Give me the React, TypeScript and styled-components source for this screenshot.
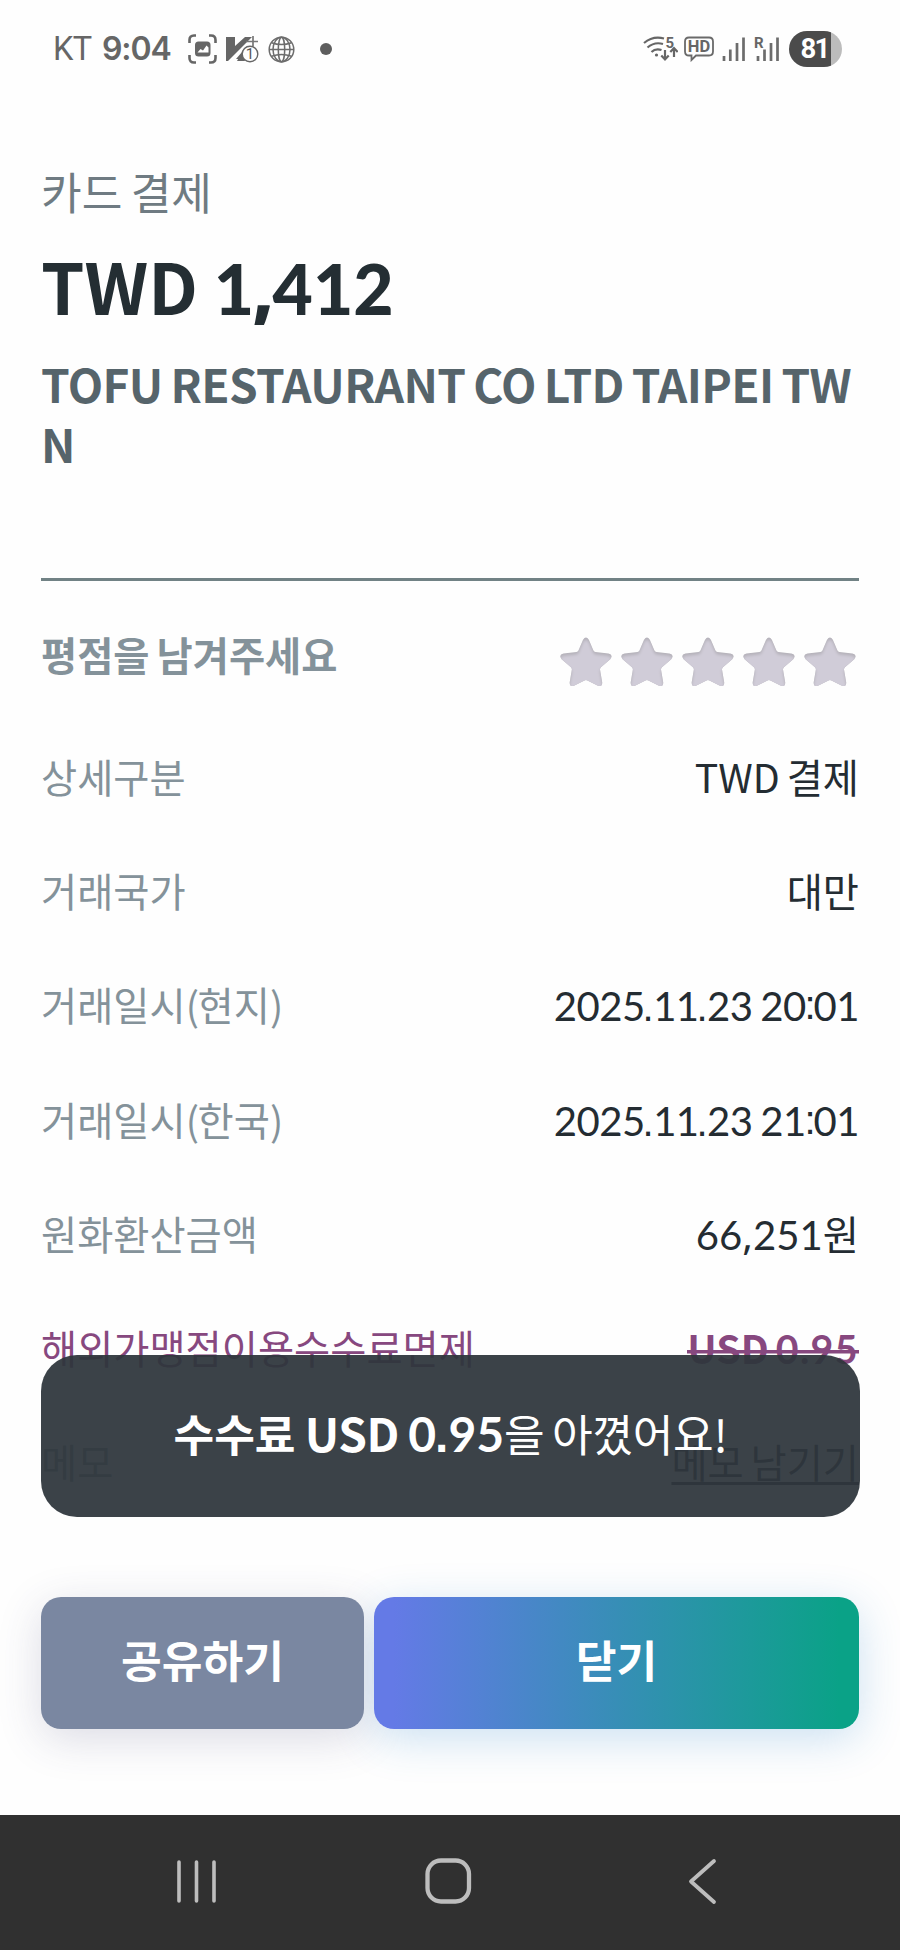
import React from "react";
import styled, { createGlobalStyle, css } from "styled-components";

const GlobalStyle = createGlobalStyle`
  * { box-sizing: border-box; }
  body {
    margin: 0;
    background: #fefefe;
    font-family: "Noto Sans CJK KR", sans-serif;
  }
`;

const Screen = styled.div`
  position: relative;
  display: flex;
  flex-direction: column;
  width: 900px;
  height: 1950px;
  background: #fefefe;
  overflow: hidden;
`;

/* ---------- status bar ---------- */

const StatusBar = styled.header`
  display: flex;
  align-items: center;
  height: 98px;
  padding: 0 58px 0 53px;
  color: #666;
`;

const Carrier = styled.span`
  width: 49px;
  font: 400 32.5px/40px Roboto, sans-serif;
  letter-spacing: -0.6px;
`;

const Clock = styled.span`
  width: 86px;
  font: 600 32px/40px Inter, sans-serif;
  letter-spacing: -1.1px;
`;

const NoticeIcons = styled.div`
  display: flex;
  align-items: center;
  gap: 9px;
`;

const MoreDot = styled.i`
  width: 12px;
  height: 12px;
  margin-left: 16px;
  border-radius: 50%;
  background: #5e5e5e;
`;

const SystemIcons = styled.div`
  display: flex;
  align-items: center;
  gap: 8px;
  margin-left: auto;
`;

const Battery = styled.div`
  display: flex;
  align-items: center;
  justify-content: center;
  width: 53px;
  height: 36px;
  margin-left: 1px;
  border-radius: 18px;
  background: linear-gradient(to right, #4b4b4b 42px, #bcbcbc 42px);
  color: #fff;
  font: 700 27.5px/36px Roboto, sans-serif;
  letter-spacing: -1.8px;
  padding-right: 2px;
`;

/* ---------- content ---------- */

const Content = styled.main`
  padding: 65px 41px 0;
  height: 1499px;
`;

const Kind = styled.p`
  margin: 0;
  font-size: 44.2px;
  line-height: 56px;
  word-spacing: -1.5px;
  color: #6f7b82;
`;

const Amount = styled.h1`
  margin: 21px 0 0;
  font-size: 69.6px;
  font-weight: 700;
  line-height: 90px;
  color: #242e33;
`;

const Merchant = styled.h2`
  margin: 23px 0 0;
  font-size: 46px;
  font-weight: 700;
  line-height: 60px;
  letter-spacing: -0.6px;
  word-spacing: -2px;
  word-break: break-all;
  color: #56646b;
`;

const Divider = styled.hr`
  height: 3px;
  margin: 105px 0 0;
  border: 0;
  background: #718285;
`;

const RatingRow = styled.section`
  display: flex;
  align-items: center;
  justify-content: space-between;
  height: 146px;
`;

const RatingLabel = styled.strong`
  font-size: 39.3px;
  font-weight: 700;
  line-height: 50px;
  word-spacing: -1.8px;
  color: #84929a;
`;

const Stars = styled.div`
  display: flex;
  gap: 8.9px;
  padding: 16px 3.5px 0 0;
`;

const Details = styled.dl`
  margin: -8px 0 0;
`;

const Row = styled.div<{ $accent?: boolean }>`
  display: flex;
  justify-content: space-between;
  height: 114.2px;
  font-size: 39.3px;
  line-height: 114px;
  word-spacing: -2px;
  white-space: pre;
  --label: ${(p) => (p.$accent ? "#87487f" : "#84929a")};
  --value: ${(p) => (p.$accent ? "#87487f" : "#242c32")};
`;

const Label = styled.dt`
  color: var(--label);
`;

const Paren = styled.span`
  letter-spacing: -1.3px;
`;

const Value = styled.dd<{ $struck?: boolean; $link?: boolean }>`
  margin: 0;
  color: var(--value);
  ${(p) =>
    p.$struck &&
    css`
      font-weight: 700;
      background: linear-gradient(var(--value), var(--value)) 0 60px / 100% 3.5px no-repeat;
    `}
  ${(p) =>
    p.$link &&
    css`
      text-decoration: underline 3px;
      text-underline-offset: 4px;
      text-decoration-skip-ink: none;
    `}
`;

/* Numerals are set in Lato beside the Korean face. */
const Digits = styled.span<{ $track?: number; $size?: string; $weight?: number }>`
  font-family: Lato, sans-serif;
  font-size: ${(p) => p.$size ?? "1em"};
  ${(p) => p.$weight && `font-weight: ${p.$weight};`}
  line-height: 0;
  letter-spacing: ${(p) => p.$track ?? 0}px;
`;

const Dot = styled.span`
  display: inline-block;
  margin: 0 -0.6px 0 -2.2px;
  font-family: "Liberation Sans", sans-serif;
  line-height: 0;
  letter-spacing: 0;
`;

const BoldDot = styled(Dot)`
  margin: 0 0 0 -1px;
`;

const Colon = styled(Dot)`
  margin: 0 -2.1px 0 -1.3px;
  transform: translateY(-2px);
`;

const Comma = styled.span<{ $pull?: number }>`
  display: inline-block;
  margin: 0 ${(p) => -(p.$pull ?? 0)}px;
  font-family: "Noto Sans", sans-serif;
  font-weight: inherit;
  line-height: 0;
  letter-spacing: 0;
`;

/* ---------- toast ---------- */

const Toast = styled.div`
  position: absolute;
  left: 41px;
  top: 1355px;
  display: flex;
  align-items: center;
  justify-content: center;
  width: 819px;
  height: 162px;
  padding-bottom: 6px;
  border-radius: 36px;
  background: rgba(47, 54, 61, 0.94);
  color: #fff;
  font-size: 44.2px;
  line-height: 60px;
  white-space: pre;
`;

const ToastText = styled.span`
  display: block;
  letter-spacing: -0.3px;
  word-spacing: -2px;
  b {
    font-weight: 700;
    letter-spacing: 0;
    word-spacing: -0.8px;
  }
`;

const ToastUnit = styled.span`
  font-size: 46px;
  line-height: 0;
  letter-spacing: -0.4px;
`;

/* ---------- actions ---------- */

const Actions = styled.div`
  display: flex;
  gap: 10px;
  height: 218px;
  padding: 0 41px 86px;
  isolation: isolate;
`;

const ActionButton = styled.button<{ $primary?: boolean }>`
  position: relative;
  flex: ${(p) => (p.$primary ? "0 0 485px" : "0 0 323px")};
  height: 132px;
  padding: 0 0 8px;
  border: 0;
  border-radius: 20px;
  font: 700 44.3px/60px "Noto Sans CJK KR", sans-serif;
  color: #fff;
  background: ${(p) =>
    p.$primary
      ? "linear-gradient(to right, #647ae6 4%, #0aa287 96%)"
      : "#7a87a1"};

  /* The glow sits behind both buttons, so neither tints its neighbour. */
  &::before {
    content: "";
    position: absolute;
    inset: 0;
    z-index: -1;
    border-radius: inherit;
    box-shadow: ${(p) =>
      p.$primary
        ? "0 10px 44px rgba(40, 130, 200, 0.24)"
        : "0 10px 44px rgba(60, 60, 110, 0.18)"};
  }
`;

const NavBar = styled.nav`
  display: flex;
  align-items: center;
  justify-content: space-between;
  height: 135px;
  padding: 0 183px 3px 174px;
  background: #303030;
`;

/* ---------- icons ---------- */

const CaptureIcon = () => (
  <svg width="29" height="30" viewBox="0 0 29 30" fill="none">
    <path
      d="M1.5 9V6q0-4.500 4.500-4.500H8M21 1.500h2q4.500 0 4.500 4.500v3M27.500 21v3q0 4.500-4.500 4.500h-2M8 28.500H6q-4.500 0-4.500-4.500v-3"
      stroke="#666"
      strokeWidth="2.600"
    />
    <rect x="7" y="7.500" width="15.500" height="15" rx="3.500" fill="#666" />
    <path d="M9.500 18.500l3-3.500 2.500 1.500 3.500-5 2 2v5z" fill="#fff" />
  </svg>
);

const VaccineIcon = () => (
  <svg width="33" height="28" viewBox="0 0 33 28">
    <path d="M0 2h9v9L19 2h7L2 26H0z" fill="#666" />
    <path d="M10 24l6-7v7zM11 26l5-9 3 9z" fill="#666" />
    <path d="M20 6.500h12M27 1v10" stroke="#777" strokeWidth="1.700" />
    <circle cx="24" cy="19" r="7.800" fill="#fefefe" stroke="#666" strokeWidth="1.400" />
    <text x="24" y="24.200" textAnchor="middle" fontFamily="Roboto, sans-serif" fontSize="15" fill="#555">
      1
    </text>
  </svg>
);

const GlobeIcon = () => (
  <svg width="27" height="27" viewBox="0 0 27 27" fill="none" stroke="#6c6c6c" strokeWidth="1.500">
    <circle cx="13.500" cy="13.500" r="12.300" />
    <ellipse cx="13.500" cy="13.500" rx="8.500" ry="12.300" />
    <ellipse cx="13.500" cy="13.500" rx="3.200" ry="12.300" />
    <path d="M1.200 13.500h24.600M3.500 6.800q10 3.600 20 0M3.500 20.200q10-3.600 20 0" />
  </svg>
);

const WifiGlyph = styled.svg`
  margin-right: -2px;
`;

const WifiIcon = () => (
  <WifiGlyph width="35" height="28" viewBox="0 0 35 28" fill="none" stroke="#666" strokeWidth="2.200">
    <path d="M1 8Q10 .500 21 3.500M4.500 12.500q7-6 15.500-3.500M8.500 17q4-4 10-2" />
    <circle cx="13.500" cy="20" r="1.600" fill="#666" stroke="none" />
    <path d="M22 15v9M18.300 20.500l3.700 4 3.700-4M31 22v-8M27.300 17l3.700-4 3.700 4" />
    <text x="22.500" y="13" fontFamily="Roboto, sans-serif" fontSize="15" fontWeight="700" fill="#666" stroke="none">
      5
    </text>
  </WifiGlyph>
);

const HdIcon = () => (
  <svg width="30" height="26" viewBox="0 0 30 26" fill="none">
    <path
      d="M5 1.500h20q4 0 4 4v10q0 4-4 4H12l-4.500 4.500v-4.500H5q-4 0-4-4v-10q0-4 4-4z"
      stroke="#6a6a6a"
      strokeWidth="1.800"
    />
    <text x="15" y="16.300" textAnchor="middle" fontFamily="Roboto, sans-serif" fontSize="16.500" fontWeight="700" fill="#666">
      HD
    </text>
  </svg>
);

const SignalIcon = ({ roaming }: { roaming?: boolean }) => (
  <svg width={roaming ? 26 : 24} height="26" viewBox={roaming ? "-2 0 26 26" : "0 0 24 26"}>
    <path
      d={roaming ? "M2 20v5M8.500 13.500V25M15 7v18M21.500 1.500V25" : "M2 20v5M8.300 13.500V25M15 7v18M21.500 1.500V25"}
      stroke="#6c6c6c"
      strokeWidth="2.700"
    />
    {roaming && (
      <text x="-2" y="12" fontFamily="Roboto, sans-serif" fontSize="15" fontWeight="700" fill="#666" stroke="#fefefe" strokeWidth="2" paintOrder="stroke">
        R
      </text>
    )}
  </svg>
);

const STAR =
  "M22.600 2.800Q25.500-1.600 28.400 2.800L33 13.500Q33.600 14.800 35 15L48 16.600Q53.300 18 49.800 22.300L40.500 30.200Q39.400 31.200 39.600 32.800L41.800 45.500Q41.800 50.500 37 48.600L27 43.400Q25.500 42.600 24 43.400L14 48.600Q9.200 50.500 9.200 45.500L11.400 32.800Q11.600 31.200 10.500 30.200L1.200 22.300Q-2.300 18 3 16.600L16 15Q17.400 14.800 18 13.500Z";

const StarIcon = () => (
  <svg width="51.900" height="50" viewBox="0 0 51 50">
    <defs>
      <clipPath id="star-clip">
        <path d={STAR} />
      </clipPath>
      <filter id="star-soft" x="-20%" y="-20%" width="140%" height="140%">
        <feGaussianBlur stdDeviation="1.500" />
      </filter>
    </defs>
    <path d={STAR} fill="#b5b2ba" />
    <g clipPath="url(#star-clip)">
      <path d={STAR} fill="#d0ccd8" filter="url(#star-soft)" transform="translate(0 2.500)" />
    </g>
  </svg>
);

const RecentsIcon = () => (
  <svg width="45" height="45" viewBox="0 0 45 45" stroke="#bdbdbd" strokeWidth="3.600" strokeLinecap="round">
    <path d="M5 3v39M22.500 3v39M40 3v39" />
  </svg>
);

const HomeGlyph = styled.svg`
  margin: 0 5px 0 -5px;
`;

const HomeIcon = () => (
  <HomeGlyph width="47" height="46" viewBox="0 0 47 46" fill="none">
    <rect x="2.500" y="2.500" width="41.500" height="41" rx="13.500" stroke="#bdbdbd" strokeWidth="4.300" />
  </HomeGlyph>
);

const BackIcon = () => (
  <svg width="30" height="47" viewBox="0 0 30 47" fill="none">
    <path d="M27 3L4 23.500 27 44" stroke="#bdbdbd" strokeWidth="3.800" strokeLinecap="round" strokeLinejoin="round" />
  </svg>
);

/* ---------- screen ---------- */

const DateTime = ({ hour }: { hour: string }) => (
  <Digits $size="1.02em" $track={-0.5}>
    2025<Dot>.</Dot>11<Dot>.</Dot>23 {hour}<Colon>:</Colon>01
  </Digits>
);

const ZoneLabel = ({ zone }: { zone: string }) => (
  <Label>
    거래일시<Paren>(</Paren>{zone}<Paren>)</Paren>
  </Label>
);

export default function App() {
  return (
    <>
      <GlobalStyle />
      <Screen>
        <StatusBar>
          <Carrier>KT</Carrier>
          <Clock>9:04</Clock>
          <NoticeIcons>
            <CaptureIcon />
            <VaccineIcon />
            <GlobeIcon />
            <MoreDot />
          </NoticeIcons>
          <SystemIcons>
            <WifiIcon />
            <HdIcon />
            <SignalIcon />
            <SignalIcon roaming />
            <Battery>81</Battery>
          </SystemIcons>
        </StatusBar>

        <Content>
          <Kind>카드 결제</Kind>
          <Amount>
            TWD <Digits $weight={900}>1<Comma $pull={1.5}>,</Comma>412</Digits>
          </Amount>
          <Merchant>TOFU RESTAURANT CO LTD TAIPEI TWN</Merchant>
          <Divider />
          <RatingRow>
            <RatingLabel>평점을 남겨주세요</RatingLabel>
            <Stars>
              {[1, 2, 3, 4, 5].map((n) => (
                <StarIcon key={n} />
              ))}
            </Stars>
          </RatingRow>
          <Details>
            <Row>
              <Label>상세구분</Label>
              <Value>TWD 결제</Value>
            </Row>
            <Row>
              <Label>거래국가</Label>
              <Value>대만</Value>
            </Row>
            <Row>
              <ZoneLabel zone="현지" />
              <Value><DateTime hour="20" /></Value>
            </Row>
            <Row>
              <ZoneLabel zone="한국" />
              <Value><DateTime hour="21" /></Value>
            </Row>
            <Row>
              <Label>원화환산금액</Label>
              <Value><Digits $size="1.02em">66<Comma>,</Comma>251</Digits>원</Value>
            </Row>
            <Row $accent>
              <Label>해외가맹점이용수수료면제</Label>
              <Value $struck>USD <Digits $track={1.4}>0.95</Digits></Value>
            </Row>
            <Row>
              <Label>메모</Label>
              <Value $link>메모 남기기</Value>
            </Row>
          </Details>
        </Content>

        <Actions>
          <ActionButton>공유하기</ActionButton>
          <ActionButton $primary>닫기</ActionButton>
        </Actions>

        <NavBar>
          <RecentsIcon />
          <HomeIcon />
          <BackIcon />
        </NavBar>

        <Toast role="status">
          <ToastText>
            <b>수수료 <ToastUnit>USD </ToastUnit><Digits $size="48px">0<BoldDot>.</BoldDot>95</Digits></b>을 아꼈어요!
          </ToastText>
        </Toast>
      </Screen>
    </>
  );
}
